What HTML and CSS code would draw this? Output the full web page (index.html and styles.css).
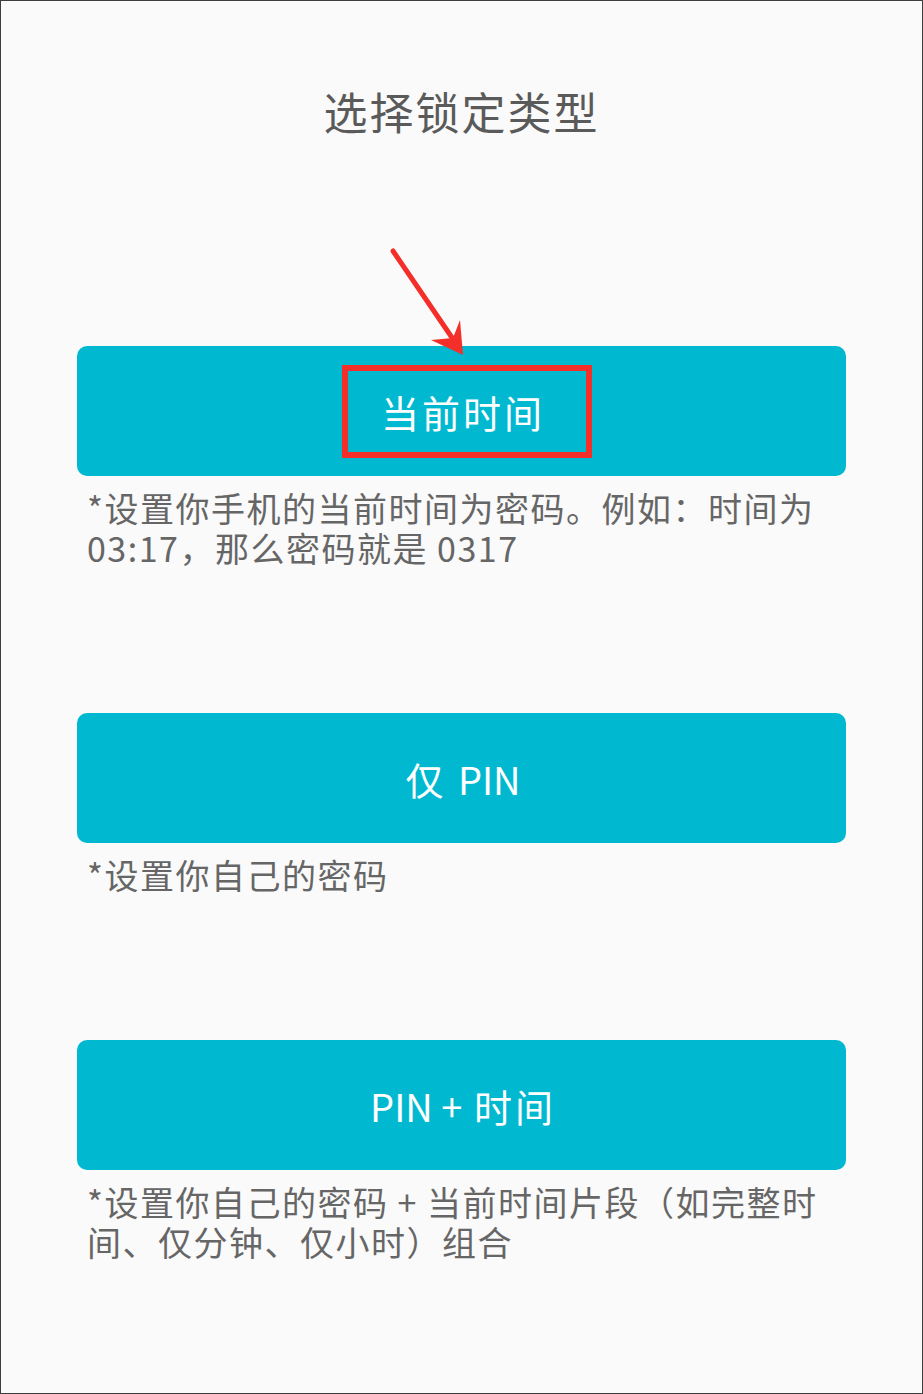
FILE: index.html
```html
<!DOCTYPE html>
<html lang="zh-CN">
<head>
<meta charset="utf-8">
<title>选择锁定类型</title>
<link rel="stylesheet" href="styles.css">
</head>
<body>
<div class="page">
  <h1 class="title">选择锁定类型</h1>

  <section class="option option-first">
    <button class="opt-btn">当前时间</button>
    <p class="desc">*设置你手机的当前时间为密码。例如：时间为03:17，那么密码就是 0317</p>
  </section>

  <section class="option">
    <button class="opt-btn">仅 <span class="latin">PIN</span></button>
    <p class="desc">*设置你自己的密码</p>
  </section>

  <section class="option">
    <button class="opt-btn"><span class="latin">PIN +</span> 时间</button>
    <p class="desc">*设置你自己的密码 + 当前时间片段（如完整时间、仅分钟、仅小时）组合</p>
  </section>

  <svg class="annot" viewBox="0 0 923 480" width="923" height="480" aria-hidden="true">
    <rect x="345" y="368" width="244" height="87" fill="none" stroke="#f42f2a" stroke-width="6"/>
    <line x1="393" y1="251" x2="455" y2="342" stroke="#f42f2a" stroke-width="5" stroke-linecap="round"/>
    <polygon points="463,355 431,340 453,338 460,320" fill="#f42f2a"/>
  </svg>
</div>
</body>
</html>
```

FILE: styles.css
```css
html, body {
  margin: 0;
  padding: 0;
  background: #fafafa;
}

.page {
  position: relative;
  box-sizing: border-box;
  width: 923px;
  height: 1394px;
  border: 1px solid #3e3e3e;
  background: #fafafa;
  padding: 80px 76px 0;
  display: flex;
  flex-direction: column;
  font-family: "Noto Sans CJK SC", "Noto Sans", sans-serif;
  overflow: hidden;
}

.title {
  margin: 0;
  font-size: 44px;
  line-height: 60px;
  font-weight: 400;
  letter-spacing: 2px;
  color: #5a5a5a;
  text-align: center;
}

.option {
  margin-top: 145px;
  display: flex;
  flex-direction: column;
}

.option-first {
  margin-top: 205px;
}

.opt-btn {
  height: 130px;
  width: 100%;
  border: none;
  border-radius: 10px;
  background: #00b9d1;
  color: #ffffff;
  font-family: "Noto Sans CJK SC", "Noto Sans", sans-serif;
  font-size: 38px;
  font-weight: 400;
  letter-spacing: 3px;
  padding: 0 0 0 3px;
  cursor: pointer;
}

.latin {
  letter-spacing: 0;
}

.desc {
  margin: 12px 0 0;
  padding: 0 10px;
  font-size: 34px;
  line-height: 40px;
  letter-spacing: 1.5px;
  color: #666666;
}

.annot {
  position: absolute;
  left: -1px;
  top: -1px;
  pointer-events: none;
}
```
